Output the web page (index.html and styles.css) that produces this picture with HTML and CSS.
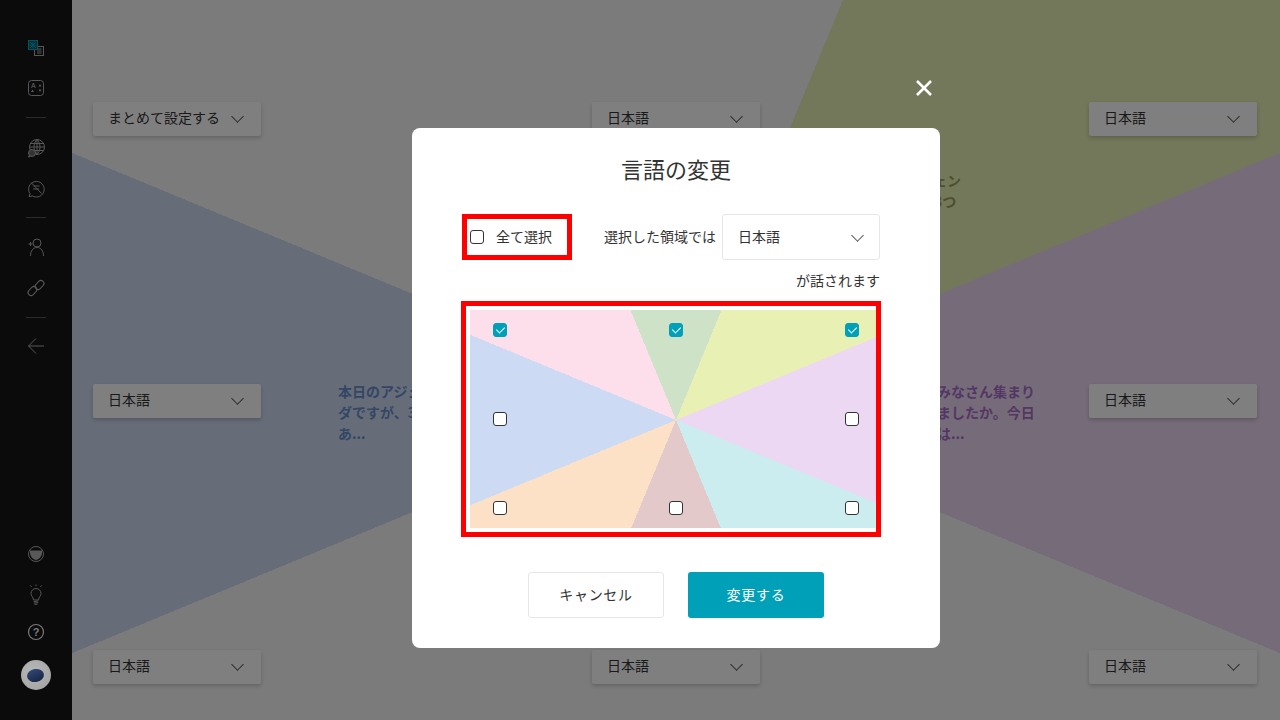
FILE: index.html
```html
<!DOCTYPE html>
<html lang="ja">
<head>
    <meta charset="UTF-8">
    <meta name="viewport" content="width=device-width, initial-scale=1.0">
    <title>言語の変更</title>
    <link rel="stylesheet" href="styles.css">
</head>
<body>

    <div class="app">

        <!-- Left icon bar -->
        <nav class="sidebar">
            <div class="side-group">
                <div class="side-item">
                    <svg class="icon" viewBox="0 0 24 24">
                        <rect class="line" x="10.5" y="10.5" width="9" height="9"/>
                        <path class="line" d="M13 13h4.500M13 15h4.500M13 17h4.500"/>
                        <rect class="teal-box" x="4.500" y="4.500" width="9" height="9"/>
                        <path class="teal" d="M6 6l6 6M12 6l-6 6M9 5.500v7M5.500 9h7"/>
                    </svg>
                </div>
                <div class="side-item">
                    <svg class="icon" viewBox="0 0 24 24">
                        <rect class="line" x="4.500" y="4.500" width="15" height="15" rx="3"/>
                        <text class="icon-letter" x="7" y="12">A</text>
                        <path class="fill" d="M14.500 10.500l1.500-2.500 1.500 2.500zM14.500 13.500h3l-1.500 2.500zM7 16l1.500-2.500 1.500 2.500z"/>
                    </svg>
                </div>
                <div class="side-divider"></div>
                <div class="side-item">
                    <svg class="icon" viewBox="0 0 24 24">
                        <circle class="line" cx="13" cy="11" r="7.500"/>
                        <path class="line" d="M13 3.500v15M5.500 11h15M6.500 7.500h13M6.500 14.500h13M13 3.500c-4 4-4 11 0 15M13 3.500c4 4 4 11 0 15"/>
                        <circle class="badge" cx="8" cy="17" r="3.500"/>
                        <path class="line" d="M5 19.500l-.5 1.500 2-.5"/>
                    </svg>
                </div>
                <div class="side-item">
                    <svg class="icon" viewBox="0 0 24 24">
                        <path class="line" d="M5 20.500l1-2.800a7.800 7.800 0 1 1 2.500 2.300z"/>
                        <path class="line" d="M7 6.500l10.500 11M9.500 10h6M9 13h6"/>
                    </svg>
                </div>
                <div class="side-divider"></div>
                <div class="side-item">
                    <svg class="icon" viewBox="0 0 24 24">
                        <circle class="line" cx="13" cy="7" r="4"/>
                        <path class="line" d="M6.500 20c0-5 2.500-8.500 6.500-8.500s6.500 3.500 6.500 8.500"/>
                        <path class="line" d="M4.500 8h4M6.500 6v4"/>
                    </svg>
                </div>
                <div class="side-item">
                    <svg class="icon" viewBox="0 0 24 24">
                        <rect class="line" x="3.500" y="12" width="10" height="6" rx="3" transform="rotate(-45 8.500 15)"/>
                        <rect class="line" x="10.500" y="6" width="10" height="6" rx="3" transform="rotate(-45 15.500 9)"/>
                    </svg>
                </div>
                <div class="side-divider"></div>
                <div class="side-item side-back">
                    <svg class="icon" viewBox="0 0 24 24">
                        <path class="line" d="M20 12H4.500M12 4.500L4.500 12l7.500 7.500"/>
                    </svg>
                </div>
            </div>

            <div class="side-group side-bottom">
                <div class="side-item">
                    <svg class="icon" viewBox="0 0 24 24">
                        <circle class="line" cx="12" cy="12" r="7.500"/>
                        <path class="fill" d="M6 8.500h12c.5 4-1.500 9-6 9.500-4.500-.5-6.500-5.500-6-9.500z"/>
                    </svg>
                </div>
                <div class="side-item side-bulb">
                    <svg class="icon" viewBox="0 0 24 24">
                        <path class="line" d="M9.500 17c0-3-2.500-3.500-2.500-6.500a5 5 0 0 1 10 0c0 3-2.500 3.500-2.500 6.500z"/>
                        <path class="line" d="M9.800 18.500l4.400-.5M9.800 20l4.400-.5M10.500 21.500l3-.4M12 1.500v1.500M6.500 2.500l1 1.300M17.500 2.500l-1 1.300"/>
                    </svg>
                </div>
                <div class="side-item side-help">
                    <svg class="icon" viewBox="0 0 24 24">
                        <circle class="line-light" cx="12" cy="12" r="7.500"/>
                        <text class="icon-help" x="12" y="16">?</text>
                    </svg>
                </div>
                <div class="avatar"><span class="avatar-pic"></span></div>
            </div>
        </nav>

        <main class="board">
            <div class="board-grid">
                <div class="cell">
                    <div class="dropdown"><span class="dropdown-text">まとめて設定する</span><span class="chevron"></span></div>
                </div>
                <div class="cell">
                    <div class="dropdown"><span class="dropdown-text">日本語</span><span class="chevron"></span></div>
                    <p class="note note-yellow note-top">アイスのチェン<br>を行います3つ</p>
                </div>
                <div class="cell">
                    <div class="dropdown"><span class="dropdown-text">日本語</span><span class="chevron"></span></div>
                </div>

                <div class="cell">
                    <div class="dropdown"><span class="dropdown-text">日本語</span><span class="chevron"></span></div>
                    <p class="note note-blue note-left">本日のアジェン<br>ダですが、3つ<br>あ...</p>
                </div>
                <div class="cell"></div>
                <div class="cell">
                    <div class="dropdown"><span class="dropdown-text">日本語</span><span class="chevron"></span></div>
                </div>

                <div class="cell">
                    <div class="dropdown"><span class="dropdown-text">日本語</span><span class="chevron"></span></div>
                </div>
                <div class="cell">
                    <div class="dropdown"><span class="dropdown-text">日本語</span><span class="chevron"></span></div>
                </div>
                <div class="cell">
                    <div class="dropdown"><span class="dropdown-text">日本語</span><span class="chevron"></span></div>
                </div>
            </div>

            <p class="note note-purple note-right">みなさん集まり<br>ましたか。今日<br>は...</p>

            <!-- Language dialog -->
            <div class="overlay">
                <div class="modal">
                    <button class="close-btn" type="button" aria-label="閉じる">
                        <svg viewBox="0 0 20 20"><path d="M3 3l14 14M17 3L3 17"/></svg>
                    </button>

                    <h2 class="modal-title">言語の変更</h2>

                    <div class="lang-row">
                        <label class="select-all">
                            <input type="checkbox" class="check">
                            <span class="select-all-text">全て選択</span>
                        </label>
                        <span class="lang-label">選択した領域では</span>
                        <div class="lang-select"><span class="lang-select-text">日本語</span><span class="chevron"></span></div>
                    </div>
                    <p class="lang-suffix">が話されます</p>

                    <div class="area-frame">
                        <div class="area-map">
                            <input type="checkbox" class="check" checked>
                            <input type="checkbox" class="check" checked>
                            <input type="checkbox" class="check" checked>
                            <input type="checkbox" class="check">
                            <span></span>
                            <input type="checkbox" class="check">
                            <input type="checkbox" class="check">
                            <input type="checkbox" class="check">
                            <input type="checkbox" class="check">
                        </div>
                    </div>

                    <div class="modal-actions">
                        <button class="btn btn-cancel" type="button">キャンセル</button>
                        <button class="btn btn-primary" type="button">変更する</button>
                    </div>
                </div>
            </div>
        </main>

    </div>

</body>
</html>
```

FILE: styles.css
```css
* {
    box-sizing: border-box;
}

body {
    font-family: "Noto Sans CJK JP", "Noto Sans", sans-serif;
    font-size: 14px;
    color: #333;
    margin: 0;
    padding: 0;
}

.app {
    display: flex;
    width: 1280px;
    height: 720px;
    overflow: hidden;
}

/* Sidebar */
.sidebar {
    display: flex;
    flex-direction: column;
    justify-content: space-between;
    flex: 0 0 72px;
    background-color: #0b0b0b;
    padding: 28px 0 30px;
}

.side-group {
    display: flex;
    flex-direction: column;
    align-items: center;
}

.side-item {
    display: flex;
    align-items: center;
    justify-content: center;
    width: 72px;
    height: 40px;
}

.side-divider {
    width: 20px;
    height: 1px;
    margin: 9px 0 10px;
    background-color: #2c2c2c;
}

.side-back {
    margin-top: -2px;
}

.side-bulb {
    margin-top: 1px;
}

.side-help {
    margin-top: -3px;
    margin-bottom: 8px;
}

.icon {
    width: 24px;
    height: 24px;
}

.icon .line {
    fill: none;
    stroke: #585858;
    stroke-width: 1;
}

.icon .line-light {
    fill: none;
    stroke: #7a7a7a;
    stroke-width: 1.2;
}

.icon .teal {
    fill: none;
    stroke: #035560;
    stroke-width: 1;
}

.icon .teal-box {
    fill: #032a30;
    stroke: #035560;
    stroke-width: 1;
}

.icon .fill {
    fill: #585858;
}

.icon .badge {
    fill: #333;
    stroke: #585858;
    stroke-width: 1;
}

.icon-letter {
    font-family: "Liberation Sans", sans-serif;
    font-size: 7px;
    fill: #6a6a6a;
}

.icon-help {
    font-family: "Liberation Sans", sans-serif;
    font-size: 11px;
    font-weight: bold;
    text-anchor: middle;
    fill: #7a7a7a;
}

.avatar {
    display: flex;
    align-items: center;
    justify-content: center;
    width: 30px;
    height: 30px;
    border-radius: 50%;
    background: radial-gradient(circle at 40% 40%, #b8b8b8, #a0a0a0);
}

.avatar-pic {
    display: block;
    width: 17px;
    height: 13px;
    margin-left: -2px;
    border-radius: 50%;
    background: linear-gradient(160deg, #34497a, #16233e);
    transform: rotate(-8deg);
}

/* Board behind the dialog */
.board {
    position: relative;
    flex: 1;
    background-color: #f7f7f7;
    background-image: conic-gradient(
        from 0deg at 604px 403px,
        transparent 0deg 22.5deg,
        #e8f0b4 22.5deg 67.5deg,
        #edd8f3 67.5deg 112.5deg,
        transparent 112.5deg 247.5deg,
        #ccdbf3 247.5deg 292.5deg,
        transparent 292.5deg 360deg
    );
}

.board-grid {
    display: grid;
    grid-template-columns: 499px 497px 168px;
    grid-template-rows: 282px 266px auto;
    padding: 102px 0 0 21px;
}

.cell {
    display: flex;
    align-items: flex-start;
}

.dropdown {
    display: flex;
    align-items: center;
    justify-content: space-between;
    flex: 0 0 168px;
    height: 34px;
    padding: 0 17px 0 15px;
    background-color: #fff;
    border-radius: 2px;
    box-shadow: 0 2px 4px rgba(0, 0, 0, 0.2);
}

.dropdown-text {
    margin-bottom: 4px;
}

.chevron {
    display: block;
    width: 9px;
    height: 9px;
    margin: -4px 2px 0 0;
    border-right: 1.2px solid #555;
    border-bottom: 1.2px solid #555;
    transform: rotate(45deg);
}

.dropdown .chevron {
    margin-top: -6px;
}

.note {
    flex: 0 0 auto;
    margin: 0;
    font-size: 14px;
    font-weight: bold;
    line-height: 21px;
    white-space: nowrap;
}

.note-yellow {
    color: #9aa060;
}

.note-blue {
    color: #6a8cc8;
}

.note-purple {
    color: #a96dc8;
}

.note-top {
    margin: 68px 0 0 104px;
}

.note-left {
    margin: -3px 0 0 77px;
}

/* sits in the middle of the board, its left end runs under the dialog */
.note-right {
    position: absolute;
    left: 865px;
    top: 381px;
}

/* Dialog */
.overlay {
    position: absolute;
    top: 0;
    right: 0;
    bottom: 0;
    left: 0;
    display: flex;
    justify-content: center;
    align-items: flex-start;
    padding-top: 128px;
    background-color: rgba(0, 0, 0, 0.5);
}

.modal {
    position: relative;
    width: 528px;
    height: 520px;
    padding: 25px 59px 0 49px;
    background-color: #fff;
    border-radius: 8px;
}

.close-btn {
    position: absolute;
    top: -52px;
    right: 4px;
    width: 24px;
    height: 24px;
    padding: 2px;
    background: none;
    border: none;
}

.close-btn svg {
    display: block;
    width: 20px;
    height: 20px;
}

.close-btn path {
    fill: none;
    stroke: #fff;
    stroke-width: 2.6;
}

.modal-title {
    margin: 0 0 31px;
    padding-left: 10px;
    font-size: 22px;
    font-weight: normal;
    line-height: 30px;
    text-align: center;
    color: #333;
}

.lang-row {
    display: flex;
    align-items: center;
    height: 46px;
    padding-left: 1px;
}

.select-all {
    display: flex;
    align-items: center;
    gap: 12px;
    width: 110px;
    height: 46px;
    padding-left: 3px;
    border: 5px solid #f00;
}

.select-all-text {
    margin-bottom: 2px;
}

.lang-label {
    margin: 0 0 2px 32px;
}

.lang-select {
    display: flex;
    align-items: center;
    justify-content: space-between;
    width: 158px;
    height: 46px;
    margin-left: 6px;
    padding: 0 15px;
    background-color: #fff;
    border: 1px solid #e6e6e6;
    border-radius: 3px;
}

.lang-select-text {
    margin-bottom: 2px;
}

.lang-select .chevron {
    margin-right: 2px;
}

.lang-suffix {
    margin: 10px 0 11px;
    padding-right: 1px;
    line-height: 20px;
    text-align: right;
}

.check {
    appearance: none;
    position: relative;
    flex: 0 0 14px;
    display: block;
    width: 14px;
    height: 14px;
    margin: 0;
    background-color: #fff;
    border: 1px solid #333;
    border-radius: 3px;
}

.check:checked {
    background-color: #00a0b8;
    border-color: #00a0b8;
}

.check:checked::after {
    content: "";
    position: absolute;
    left: 4px;
    top: 1px;
    width: 4px;
    height: 7px;
    border-right: 1.2px solid #fff;
    border-bottom: 1.2px solid #fff;
    transform: rotate(45deg);
}

.area-frame {
    width: 420px;
    height: 236px;
    padding: 4px;
    border: 5px solid #f00;
}

.area-map {
    display: grid;
    grid-template-columns: repeat(3, 14px);
    grid-template-rows: repeat(3, 14px);
    justify-content: space-between;
    align-content: space-between;
    width: 406px;
    height: 218px;
    padding: 13px 17px 13px 23px;
    background-image: conic-gradient(
        from 0deg at 206px 110px,
        #cde2c6 0deg 22.5deg,
        #e8f0b4 22.5deg 67.5deg,
        #edd8f3 67.5deg 112.5deg,
        #cbedf0 112.5deg 157.5deg,
        #e3c9c9 157.5deg 202.5deg,
        #fde1c6 202.5deg 247.5deg,
        #ccdbf3 247.5deg 292.5deg,
        #fcdfeb 292.5deg 337.5deg,
        #cde2c6 337.5deg 360deg
    );
}

.modal-actions {
    display: flex;
    justify-content: center;
    gap: 24px;
    width: 430px;
    margin-top: 35px;
}

.btn {
    width: 136px;
    height: 46px;
    padding: 0 0 2px;
    font-family: inherit;
    font-size: 14px;
    letter-spacing: 0.05em;
    border-radius: 3px;
}

.btn-cancel {
    color: #333;
    background-color: #fff;
    border: 1px solid #e6e6e6;
}

.btn-primary {
    color: #fff;
    background-color: #00a0b8;
    border: none;
}
```
